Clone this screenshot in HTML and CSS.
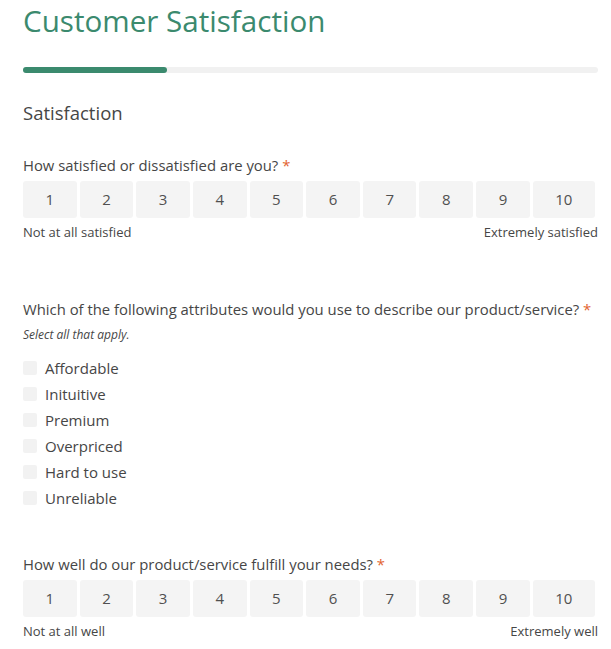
FILE: index.html
```html
<!DOCTYPE html>
<html>
<head>
<meta charset="utf-8">
<link rel="stylesheet" href="styles.css">
</head>
<body>
<div class="survey">
  <h1 class="title">Customer Satisfaction</h1>
  <div class="progress"><div class="progress-fill" style="width:25%"></div></div>
  <h2 class="section">Satisfaction</h2>

  <div class="question q1">
    <div class="q-text">How satisfied or dissatisfied are you? <span class="req">*</span></div>
    <div class="scale">
      <div class="opt">1</div><div class="opt">2</div><div class="opt">3</div><div class="opt">4</div><div class="opt">5</div><div class="opt">6</div><div class="opt">7</div><div class="opt">8</div><div class="opt">9</div><div class="opt">10</div>
    </div>
    <div class="scale-labels"><span>Not at all satisfied</span><span>Extremely satisfied</span></div>
  </div>

  <div class="question q2">
    <div class="q-text">Which of the following attributes would you use to describe our product/service? <span class="req">*</span></div>
    <div class="hint">Select all that apply.</div>
    <ul class="checks">
      <li><span class="box"></span>Affordable</li>
      <li><span class="box"></span>Inituitive</li>
      <li><span class="box"></span>Premium</li>
      <li><span class="box"></span>Overpriced</li>
      <li><span class="box"></span>Hard to use</li>
      <li><span class="box"></span>Unreliable</li>
    </ul>
  </div>

  <div class="question q3">
    <div class="q-text">How well do our product/service fulfill your needs? <span class="req">*</span></div>
    <div class="scale">
      <div class="opt">1</div><div class="opt">2</div><div class="opt">3</div><div class="opt">4</div><div class="opt">5</div><div class="opt">6</div><div class="opt">7</div><div class="opt">8</div><div class="opt">9</div><div class="opt">10</div>
    </div>
    <div class="scale-labels"><span>Not at all well</span><span>Extremely well</span></div>
  </div>
</div>
</body>
</html>
```

FILE: styles.css
```css
html, body {
  margin: 0;
  padding: 0;
  background: #ffffff;
}
body {
  font-family: "Open Sans", "Liberation Sans", sans-serif;
  color: #464646;
}
.survey {
  width: 575px;
  padding-left: 23px;
}
.title {
  margin: 0;
  padding-top: 1px;
  font-size: 29.6px;
  line-height: 39px;
  font-weight: 400;
  color: #3b8a6e;
}
.progress {
  margin-top: 27px;
  height: 6px;
  background: #f1f1f1;
  border-radius: 3px;
}
.progress-fill {
  height: 6px;
  background: #3b8a6e;
  border-radius: 3px;
}
.section {
  margin: 26px 0 0;
  font-size: 18.5px;
  line-height: 28px;
  font-weight: 400;
  color: #464646;
}
.question {
  margin: 0;
}
.q1 { margin-top: 27px; }
.q2 { margin-top: 57px; }
.q3 { margin-top: 42px; }
.q-text {
  font-size: 14.85px;
  line-height: 22px;
}
.req {
  color: #e2622f;
}
.scale {
  display: flex;
  margin-top: 5px;
}
.opt {
  flex: 1 1 auto;
  margin-right: 3px;
  height: 37px;
  line-height: 37px;
  text-align: center;
  background: #f4f4f4;
  border-radius: 3px;
  font-size: 15px;
  color: #505050;
}
.scale-labels {
  display: flex;
  justify-content: space-between;
  margin-top: 5px;
  font-size: 13px;
  line-height: 18px;
}
.hint {
  margin-top: 6px;
  font-size: 12px;
  line-height: 18px;
  font-style: italic;
}
.checks {
  list-style: none;
  margin: 11px 0 0;
  padding: 0;
}
.checks li {
  display: flex;
  align-items: center;
  height: 26px;
  font-size: 15px;
  line-height: 26px;
}
.box {
  width: 14px;
  height: 14px;
  background: #f2f2f2;
  border-radius: 2px;
  margin-right: 8px;
}
```
